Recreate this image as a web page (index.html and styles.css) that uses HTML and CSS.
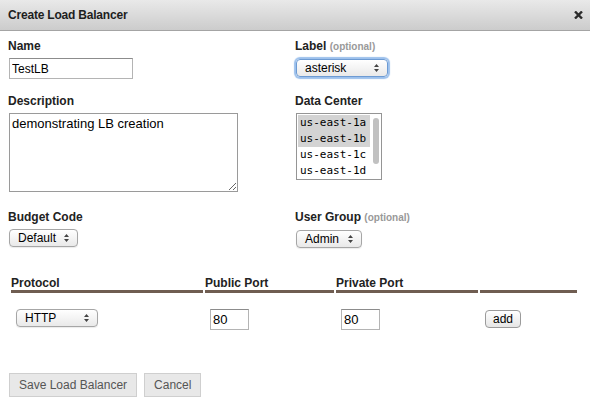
FILE: index.html
```html
<!DOCTYPE html>
<html>
<head>
<meta charset="utf-8">
<link rel="stylesheet" href="styles.css">
</head>
<body>
<div class="dialog">
  <div class="titlebar">
    <span class="title">Create Load Balancer</span>
    <svg class="close" width="9" height="8" viewBox="0 0 9 8"><path d="M1 0.5 L8 7.5 M8 0.5 L1 7.5" stroke="#2b2b2b" stroke-width="2.4" fill="none"/></svg>
  </div>
  <div class="form">
    <div class="grid">
      <div class="field">
        <label class="lbl">Name</label>
        <input class="text name-input" type="text" value="TestLB">
      </div>
      <div class="field">
        <label class="lbl">Label <span class="opt">(optional)</span></label>
        <div class="select focus w92">asterisk</div>
      </div>
      <div class="field">
        <label class="lbl">Description</label>
        <textarea class="desc">demonstrating LB creation</textarea>
      </div>
      <div class="field">
        <label class="lbl">Data Center</label>
        <div class="listbox">
          <div class="items">
            <div class="item sel">us-east-1a</div>
            <div class="item sel">us-east-1b</div>
            <div class="item">us-east-1c</div>
            <div class="item">us-east-1d</div>
          </div>
          <div class="scrollbar"><div class="thumb"></div></div>
        </div>
      </div>
      <div class="field">
        <label class="lbl">Budget Code</label>
        <div class="select w69">Default</div>
      </div>
      <div class="field">
        <label class="lbl">User Group <span class="opt">(optional)</span></label>
        <div class="select w66">Admin</div>
      </div>
    </div>
    <table class="ports">
      <thead>
        <tr>
          <th class="c1">Protocol</th>
          <th class="c2">Public Port</th>
          <th class="c3">Private Port</th>
          <th class="c4"></th>
        </tr>
      </thead>
      <tbody>
        <tr>
          <td><div class="select w82">HTTP</div></td>
          <td><input class="text port" type="text" value="80"></td>
          <td><input class="text port" type="text" value="80"></td>
          <td><button class="add">add</button></td>
        </tr>
      </tbody>
    </table>
    <div class="actions">
      <button class="btn">Save Load Balancer</button>
      <button class="btn">Cancel</button>
    </div>
  </div>
</div>
</body>
</html>
```
FILE: styles.css
```css
html, body {
  margin: 0;
  padding: 0;
  background: #ffffff;
  font-family: "Liberation Sans", Arial, sans-serif;
  color: #222;
}

.titlebar {
  height: 30px;
  border-bottom: 1px solid #a4a4a4;
  background: linear-gradient(#e9e9e9, #cccccc);
  display: flex;
  align-items: center;
  justify-content: space-between;
  padding: 0 7px 0 8px;
}

.title {
  font-weight: bold;
  font-size: 12px;
  color: #1e1e1e;
  letter-spacing: -0.2px;
}

.close {
  display: block;
  margin-top: 0;
}

.form {
  padding: 8px 8px 0 8px;
}

.grid {
  display: grid;
  grid-template-columns: 287px 1fr;
  row-gap: 15px;
}

.lbl {
  display: block;
  font-weight: bold;
  font-size: 12px;
  line-height: 14px;
  margin-bottom: 5px;
  color: #222;
}

.opt {
  font-size: 10px;
  color: #999;
}

.text {
  display: block;
  box-sizing: border-box;
  margin: 0 0 0 1px;
  height: 21px;
  padding: 0 2px;
  border: 1px solid #b4b4b4;
  border-top-color: #8c8c8c;
  font-family: "Liberation Sans", Arial, sans-serif;
  color: #000;
  outline: none;
}

.name-input {
  width: 124px;
  font-size: 12px;
}

.port {
  width: 39px;
  font-size: 13px;
  margin: 0;
}

.desc {
  display: block;
  box-sizing: border-box;
  width: 229px;
  height: 79px;
  margin: 0 0 3px 1px;
  padding: 2px 2px;
  border: 1px solid #9a9a9a;
  font-family: "Liberation Sans", Arial, sans-serif;
  font-size: 13px;
  line-height: 16px;
  color: #000;
  resize: both;
  outline: none;
}

.select {
  box-sizing: border-box;
  height: 18px;
  margin-left: 1px;
  padding-left: 8px;
  border: 1px solid #a6a6a6;
  border-radius: 4px;
  font-size: 12px;
  line-height: 16px;
  color: #000;
  background:
    url("data:image/svg+xml;utf8,<svg xmlns='http://www.w3.org/2000/svg' width='5' height='8' viewBox='0 0 5 8'><path d='M0 3 L2.5 0 L5 3 Z M0 5 L2.5 8 L5 5 Z' fill='%23444'/></svg>") no-repeat right 8px center,
    linear-gradient(#ffffff, #e9e9e9);
  box-shadow: 0 1px 1px rgba(0,0,0,0.08);
}

.focus {
  border-color: #6d9bd3;
  box-shadow: 0 0 1px 2px #9cc0ec;
}

.w92 { width: 92px; }
.w69 { width: 69px; }
.w66 { width: 66px; }
.w82 { width: 82px; margin-left: 0; }

.listbox {
  box-sizing: border-box;
  width: 86px;
  height: 67px;
  margin-left: 1px;
  border: 1px solid #959595;
  display: flex;
  padding: 1px 0 0 1px;
  overflow: hidden;
}

.items {
  width: 72px;
}

.item {
  height: 16px;
  line-height: 16px;
  padding-left: 2px;
  font-family: "DejaVu Sans Mono", monospace;
  font-size: 11px;
  color: #000;
}

.item.sel {
  background: #d3d3d3;
}

.scrollbar {
  width: 11px;
  display: flex;
  justify-content: center;
  padding-top: 3px;
}

.thumb {
  width: 6px;
  height: 46px;
  border-radius: 3px;
  background: #c1c1c1;
}

.ports {
  margin: 26px 0 0 1px;
  width: 570px;
  border-collapse: separate;
  border-spacing: 2px;
  table-layout: fixed;
}

.ports th {
  text-align: left;
  font-weight: bold;
  font-size: 12px;
  line-height: 14px;
  padding: 0;
  border-bottom: 3px solid #6f5d51;
  color: #222;
  height: 14px;
}

.c1 { width: 192px; }
.c2 { width: 129px; }
.c3 { width: 142px; }
.c4 { width: 97px; }

.ports td {
  padding: 14px 5px 10px 5px;
  vertical-align: top;
}

.add {
  box-sizing: border-box;
  width: 36px;
  height: 18px;
  padding: 0;
  border: 1px solid #9b9b9b;
  border-radius: 4px;
  background: linear-gradient(#ffffff, #e6e6e6);
  font-family: "Liberation Sans", Arial, sans-serif;
  font-size: 12px;
  color: #000;
  line-height: 14px;
}

.actions {
  display: flex;
  gap: 7px;
  margin: 31px 0 0 1px;
}

.btn {
  box-sizing: border-box;
  height: 24px;
  padding: 0 9px;
  border: 1px solid #cfcfcf;
  background: #e8e8e8;
  font-family: "Liberation Sans", Arial, sans-serif;
  font-size: 12px;
  color: #555;
}
```
